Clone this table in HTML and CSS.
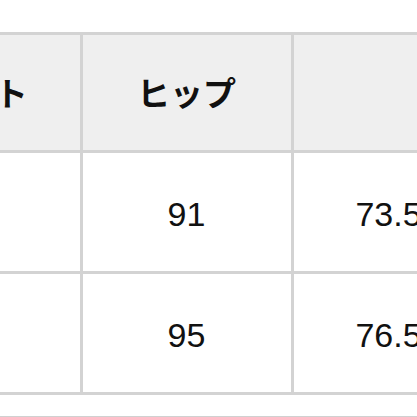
FILE: index.html
```html
<!DOCTYPE html>
<html lang="ja">
<head>
<meta charset="utf-8">
<link rel="stylesheet" href="styles.css">
</head>
<body>
<div class="page">
  <div class="spacer"></div>
  <table class="size-table">
    <colgroup>
      <col class="col-waist">
      <col class="col-hip">
      <col class="col-inseam">
    </colgroup>
    <thead>
      <tr>
        <th>ウエスト</th>
        <th>ヒップ</th>
        <th></th>
      </tr>
    </thead>
    <tbody>
      <tr>
        <td>70</td>
        <td>91</td>
        <td>73.5</td>
      </tr>
      <tr>
        <td>74</td>
        <td>95</td>
        <td>76.5</td>
      </tr>
    </tbody>
  </table>
  <div class="after"></div>
</div>
</body>
</html>
```

FILE: styles.css
```css
html, body {
  margin: 0;
  padding: 0;
  background: #ffffff;
}
body {
  width: 417px;
  height: 417px;
  overflow: hidden;
}
.page {
  width: 417px;
  height: 417px;
  overflow: hidden;
}
.spacer {
  height: 32px;
}
.size-table {
  margin-left: -156px;
  border-collapse: collapse;
  table-layout: fixed;
  width: 641px;
  border-top: 3px solid #d3d3d3;
}
.col-waist {
  width: 237px;
}
.col-hip {
  width: 211px;
}
.col-inseam {
  width: 193px;
}
.size-table th,
.size-table td {
  padding: 0;
  text-align: center;
  vertical-align: middle;
  border-right: 3px solid #d3d3d3;
  border-bottom: 3px solid #d3d3d3;
  color: #111111;
}
.size-table th {
  height: 115px;
  background: #efefef;
  font-family: "Noto Sans CJK JP", "Noto Sans", sans-serif;
  font-weight: 700;
  font-size: 33px;
  line-height: 1;
}
.size-table td {
  height: 115px;
  padding-top: 3px;
  background: #ffffff;
  font-family: "Liberation Sans", Arial, sans-serif;
  font-weight: 400;
  font-size: 34px;
  line-height: 1;
}
.after {
  height: 21px;
  border-bottom: 1px solid #d0d0d0;
}
```
